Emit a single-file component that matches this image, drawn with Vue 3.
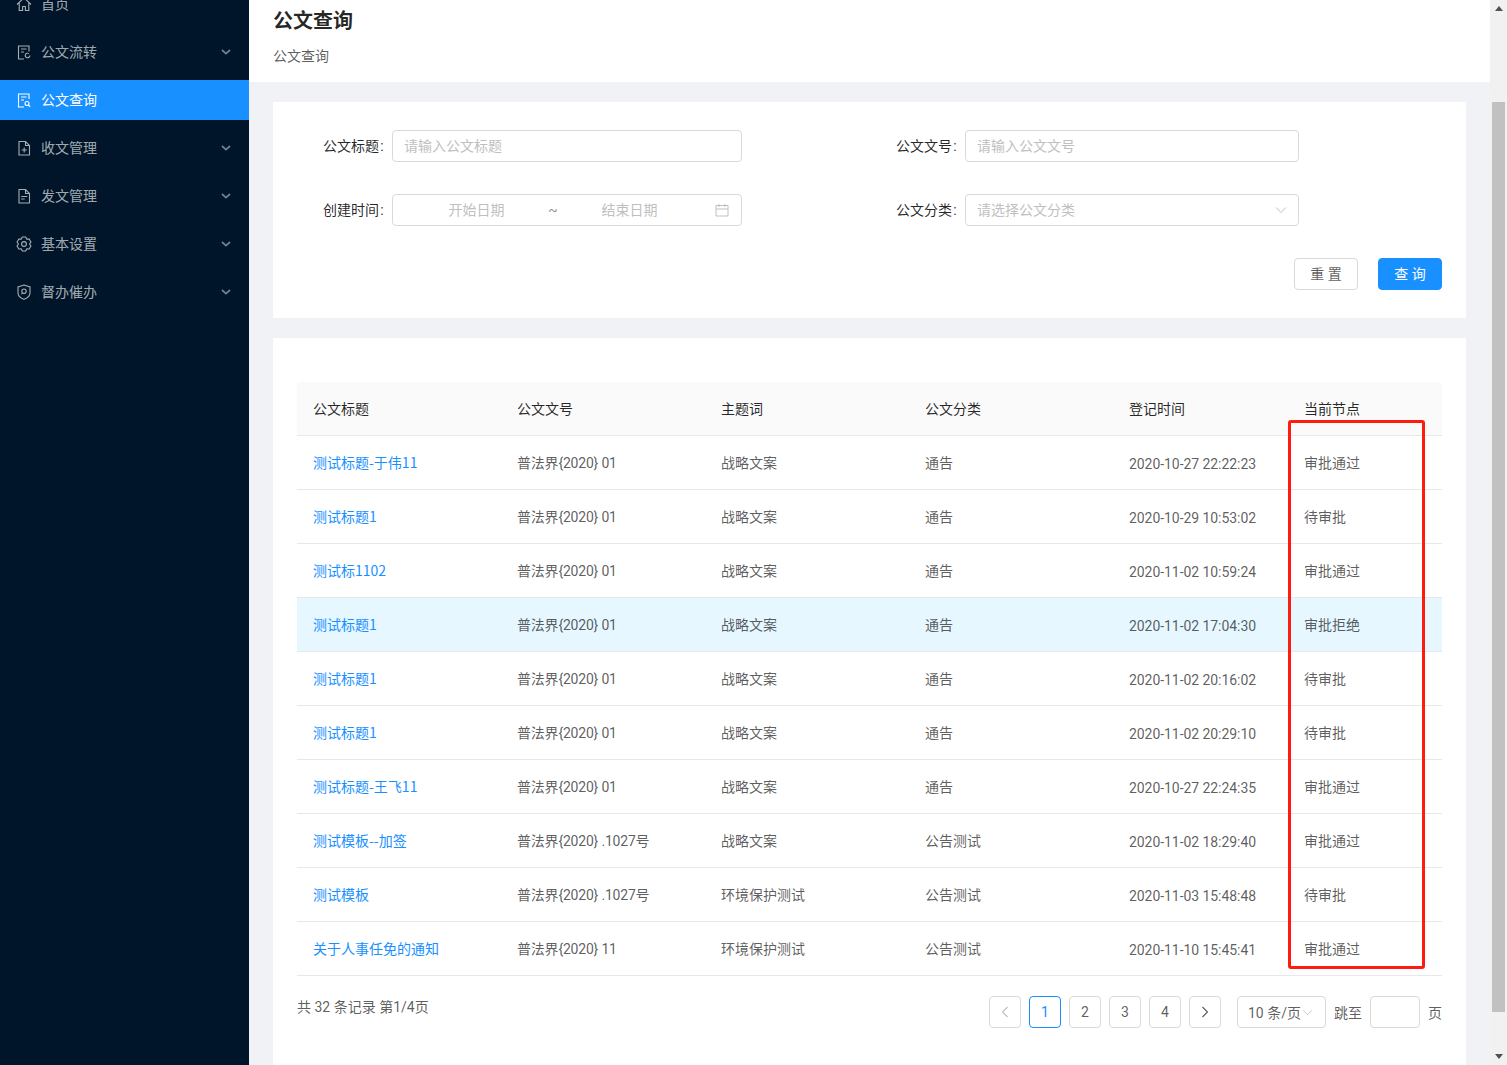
<template>
  <div class="page">
    <aside class="sider">
      <ul class="menu">
        <li
          v-for="item in menus"
          :key="item.name"
          class="menu-item"
          :class="{ active: item.active }"
        >
          <svg class="menu-icon" viewBox="0 0 16 16" width="16" height="16">
            <path :d="item.icon" />
          </svg>
          <span class="menu-name">{{ item.name }}</span>
          <svg v-if="item.arrow" class="menu-arrow" viewBox="0 0 10 6" width="10" height="6">
            <path d="M1 1l4 3.6L9 1" />
          </svg>
        </li>
      </ul>
    </aside>

    <main class="main">
      <header class="head">
        <h1>公文查询</h1>
        <p>公文查询</p>
      </header>

      <div class="body">
        <section class="card search">
          <div class="form">
            <label>公文标题<i>:</i></label>
            <input class="control" placeholder="请输入公文标题" />
            <label>公文文号<i>:</i></label>
            <input class="control" placeholder="请输入公文文号" />
            <label>创建时间<i>:</i></label>
            <div class="control range">
              <input placeholder="开始日期" />
              <span class="tilde">~</span>
              <input placeholder="结束日期" />
              <svg class="calendar" viewBox="0 0 14 14" width="14" height="14">
                <path d="M1 2.5h12v10.5H1zM1 6h12M4 1v3M10 1v3" />
              </svg>
            </div>
            <label>公文分类<i>:</i></label>
            <div class="control select">
              <span>请选择公文分类</span>
              <svg viewBox="0 0 12 8" width="12" height="8">
                <path d="M1 1.500l5 5 5-5" />
              </svg>
            </div>
          </div>
          <div class="actions">
            <button class="btn"><span>重 置</span></button>
            <button class="btn primary"><span>查 询</span></button>
          </div>
        </section>

        <section class="card result">
          <table class="table">
            <colgroup>
              <col style="width: 204px" />
              <col style="width: 204px" />
              <col style="width: 204px" />
              <col style="width: 204px" />
              <col style="width: 175px" />
              <col />
            </colgroup>
            <thead>
              <tr>
                <th v-for="col in columns" :key="col">{{ col }}</th>
              </tr>
            </thead>
            <tbody>
              <tr v-for="(row, i) in rows" :key="i" :class="{ hover: i === 3 }">
                <td class="title"><a>{{ row[0] }}</a></td>
                <td class="code">{{ row[1] }}</td>
                <td>{{ row[2] }}</td>
                <td>{{ row[3] }}</td>
                <td class="time">{{ row[4] }}</td>
                <td>{{ row[5] }}</td>
              </tr>
            </tbody>
          </table>

          <div class="foot">
            <span class="total">共 32 条记录 第1/4页</span>
            <div class="pager">
              <span class="page-btn off">
                <svg viewBox="0 0 8 12" width="8" height="12"><path d="M6.500 1L1.500 6l5 5" /></svg>
              </span>
              <span
                v-for="n in 4"
                :key="n"
                class="page-btn"
                :class="{ current: n === 1 }"
              >{{ n }}</span>
              <span class="page-btn">
                <svg viewBox="0 0 8 12" width="8" height="12"><path d="M1.500 1l5 5-5 5" /></svg>
              </span>
              <span class="size">
                <span>10 条/页</span>
                <svg viewBox="0 0 12 8" width="11" height="7"><path d="M1 1.500l5 5 5-5" /></svg>
              </span>
              <span class="jump">跳至</span>
              <input class="jump-input" />
              <span class="jump">页</span>
            </div>
          </div>
        </section>
      </div>
    </main>

    <div class="scrollbar">
      <i class="tri up"></i>
      <div class="thumb"></div>
      <i class="tri down"></i>
    </div>

    <!-- 截图上的红框标注 -->
    <div class="mark"></div>
  </div>
</template>

<script setup>
// 齿轮图标的路径
const gearPath = () => {
  let d = ''
  for (let i = 0; i < 6; i++) {
    const a = ((i * 60 - 90) * Math.PI) / 180
    const pts = [
      [7.2, a - 0.24],
      [7.2, a + 0.24],
      [5.6, a + 0.52],
    ]
    pts.forEach(([r, t], j) => {
      const x = (8 + r * Math.cos(t)).toFixed(2)
      const y = (8 + r * Math.sin(t)).toFixed(2)
      d += (i === 0 && j === 0 ? 'M' : 'L') + x + ' ' + y
    })
  }
  return d + 'ZM10.4 8a2.4 2.4 0 1 1-4.8 0a2.4 2.4 0 1 1 4.8 0Z'
}

const docFlow = 'M13 7.5V2H2.500v13h5.500M5 5h5.500M5 8h3M13.800 11.500a2.300 2.300 0 1 1-1-1.900'
const docSearch = 'M13 7V2H2.500v13h5.500M5 5h5.500M5 8h3M13 11.500a2 2 0 1 1-4 0a2 2 0 1 1 4 0M12.600 13.200l1.600 1.600'
const docAdd = 'M3 1.500h6.500L13.500 5.500V15H3zM9.500 1.500v4h4M8.200 7.500v5M5.700 10h5'
const docSend = 'M3 1.500h6.500L13.500 5.500V15H3zM9.500 1.500v4h4M5.200 8.500h6M5.200 11h3.500'
const shield = 'M8 1l6 2v6c0 3-2.500 5-6 6.300C4.500 14 2 12 2 9V3zM10.200 7.200a2.200 2.200 0 1 1-4.400 0a2.200 2.200 0 1 1 4.400 0M6.500 8.800l-1 1.400'
const home = 'M1 8.500L8 1.800l7 6.700M3.200 7v7.500h3.400v-4h2.800v4h3.400V7'

const menus = [
  { name: '首页', icon: home },
  { name: '公文流转', icon: docFlow, arrow: true },
  { name: '公文查询', icon: docSearch, active: true },
  { name: '收文管理', icon: docAdd, arrow: true },
  { name: '发文管理', icon: docSend, arrow: true },
  { name: '基本设置', icon: gearPath(), arrow: true },
  { name: '督办催办', icon: shield, arrow: true },
]

const columns = ['公文标题', '公文文号', '主题词', '公文分类', '登记时间', '当前节点']

const rows = [
  ['测试标题-于伟11', '普法界{2020} 01', '战略文案', '通告', '2020-10-27 22:22:23', '审批通过'],
  ['测试标题1', '普法界{2020} 01', '战略文案', '通告', '2020-10-29 10:53:02', '待审批'],
  ['测试标1102', '普法界{2020} 01', '战略文案', '通告', '2020-11-02 10:59:24', '审批通过'],
  ['测试标题1', '普法界{2020} 01', '战略文案', '通告', '2020-11-02 17:04:30', '审批拒绝'],
  ['测试标题1', '普法界{2020} 01', '战略文案', '通告', '2020-11-02 20:16:02', '待审批'],
  ['测试标题1', '普法界{2020} 01', '战略文案', '通告', '2020-11-02 20:29:10', '待审批'],
  ['测试标题-王飞11', '普法界{2020} 01', '战略文案', '通告', '2020-10-27 22:24:35', '审批通过'],
  ['测试模板--加签', '普法界{2020} .1027号', '战略文案', '公告测试', '2020-11-02 18:29:40', '审批通过'],
  ['测试模板', '普法界{2020} .1027号', '环境保护测试', '公告测试', '2020-11-03 15:48:48', '待审批'],
  ['关于人事任免的通知', '普法界{2020} 11', '环境保护测试', '公告测试', '2020-11-10 15:45:41', '审批通过'],
]
</script>

<style>
html,
body {
  margin: 0;
  overflow: hidden;
}
</style>

<style scoped>
.page {
  position: relative;
  display: flex;
  height: 100vh;
  overflow: hidden;
  font-family: Roboto, "Noto Sans CJK SC", sans-serif;
  font-size: 14px;
  color: rgba(0, 0, 0, 0.65);
  background: #f0f2f5;
}

/* 左侧菜单 */
.sider {
  flex: 0 0 249px;
  background: #001529;
}
.menu {
  margin: -16px 0 0;
  padding: 0;
  list-style: none;
  display: flex;
  flex-direction: column;
  gap: 8px;
}
.menu-item {
  display: flex;
  align-items: center;
  height: 40px;
  padding: 0 18px 0 16px;
  color: rgba(255, 255, 255, 0.65);
}
.menu-item.active {
  background: #1890ff;
  color: #fff;
}
.menu-icon {
  margin-right: 9px;
  fill: none;
  stroke: currentColor;
  stroke-width: 1.1;
}
.menu-name {
  flex: 1;
  padding-bottom: 2px;
}
.menu-arrow {
  fill: none;
  stroke: rgba(255, 255, 255, 0.45);
  stroke-width: 1.8;
}

/* 右侧内容 */
.main {
  flex: 1;
  min-width: 0;
  display: flex;
  flex-direction: column;
}
.head {
  height: 82px;
  box-sizing: border-box;
  padding: 7px 24px 0;
  background: #fff;
}
.head h1 {
  margin: 0;
  font-size: 20px;
  line-height: 28px;
  font-weight: 700;
  color: rgba(0, 0, 0, 0.85);
}
.head p {
  margin: 10px 0 0;
  line-height: 22px;
}
.body {
  flex: 1;
  display: flex;
  flex-direction: column;
  gap: 20px;
  padding: 20px 24px 0;
}
.card {
  background: #fff;
}
.search {
  padding: 28px 24px 28px 0;
}
.form {
  display: grid;
  grid-template-columns: 119px 350px 223px 334px;
  row-gap: 32px;
  align-items: center;
}
.form label {
  padding: 0 7px 2px 0;
  text-align: right;
  white-space: nowrap;
  color: rgba(0, 0, 0, 0.85);
}
.form label i {
  display: inline-block;
  width: 6px;
  font-style: normal;
  text-align: center;
}
.control {
  box-sizing: border-box;
  height: 32px;
  padding: 0 11px;
  border: 1px solid #d9d9d9;
  border-radius: 4px;
  background: #fff;
  font: inherit;
  color: rgba(0, 0, 0, 0.65);
  outline: none;
}
input::placeholder {
  color: #bfbfbf;
  opacity: 1;
}
.range {
  display: flex;
  align-items: center;
  padding: 0 0 0 13px;
}
.range input {
  width: 141px;
  padding: 0;
  border: 0;
  outline: none;
  font: inherit;
  text-align: center;
}
.tilde {
  width: 12px;
  text-align: center;
  color: rgba(0, 0, 0, 0.45);
}
.calendar {
  margin-left: 15px;
  fill: none;
  stroke: #bfbfbf;
  stroke-width: 1;
}
.select {
  display: flex;
  align-items: center;
  justify-content: space-between;
  color: #bfbfbf;
}
.select span {
  padding-bottom: 2px;
}
.select svg {
  fill: none;
  stroke: #bfbfbf;
  stroke-width: 1;
}
.actions {
  display: flex;
  justify-content: flex-end;
  gap: 20px;
  margin-top: 32px;
}
.btn {
  width: 64px;
  height: 32px;
  padding: 0 0 2px;
  border: 1px solid #d9d9d9;
  border-radius: 4px;
  background: #fff;
  font: inherit;
  color: rgba(0, 0, 0, 0.65);
}
.btn.primary {
  border-color: #1890ff;
  background: #1890ff;
  color: #fff;
}

/* 列表 */
.result {
  flex: 1;
  padding: 44px 24px 0;
}
.table {
  width: 100%;
  table-layout: fixed;
  border-collapse: separate;
  border-spacing: 0;
}
.table th,
.table td {
  height: 54px;
  box-sizing: border-box;
  padding: 0 16px 2px;
  border-bottom: 1px solid #e8e8e8;
  text-align: left;
  white-space: nowrap;
}
.table th {
  background: #fafafa;
  font-weight: 400;
  color: rgba(0, 0, 0, 0.85);
}
.table th:first-child {
  border-top-left-radius: 4px;
}
.table th:last-child {
  border-top-right-radius: 4px;
}
.table .hover td {
  background: #e6f7ff;
}
.table a {
  color: #1890ff;
}
.table .title {
  font-family: "Noto Sans CJK SC", sans-serif;
}
.table .code {
  letter-spacing: -0.2px;
}
.table .time {
  padding: 2px 16px 0;
  letter-spacing: -0.06px;
}
.foot {
  display: flex;
  justify-content: space-between;
  align-items: flex-start;
  margin-top: 20px;
}
.total {
  line-height: 22px;
}
.pager {
  display: flex;
  align-items: center;
  gap: 8px;
}
.page-btn {
  display: flex;
  align-items: center;
  justify-content: center;
  box-sizing: border-box;
  width: 32px;
  height: 32px;
  border: 1px solid #d9d9d9;
  border-radius: 4px;
}
.page-btn svg {
  fill: none;
  stroke: rgba(0, 0, 0, 0.65);
  stroke-width: 1.1;
}
.page-btn.off svg {
  stroke: #bfbfbf;
}
.page-btn.current {
  border-color: #1890ff;
  color: #1890ff;
}
.size {
  display: flex;
  align-items: center;
  gap: 1px;
  box-sizing: border-box;
  width: 89px;
  height: 32px;
  margin-left: 8px;
  padding: 0 0 0 10px;
  border: 1px solid #d9d9d9;
  border-radius: 4px;
  white-space: nowrap;
}
.size svg {
  fill: none;
  stroke: #bfbfbf;
  stroke-width: 1;
}
.jump-input {
  box-sizing: border-box;
  width: 50px;
  height: 32px;
  border: 1px solid #d9d9d9;
  border-radius: 4px;
  outline: none;
}

/* 滚动条 */
.scrollbar {
  flex: 0 0 17px;
  display: flex;
  flex-direction: column;
  align-items: center;
  background: #f1f1f1;
}
.thumb {
  width: 13px;
  height: 910px;
  margin-top: 91px;
  background: #c1c1c1;
}
.tri {
  width: 0;
  height: 0;
  border-left: 4px solid transparent;
  border-right: 4px solid transparent;
}
.tri.up {
  margin-top: 6px;
  border-bottom: 5px solid #505050;
}
.tri.down {
  margin-top: auto;
  margin-bottom: 6px;
  border-top: 5px solid #505050;
}

/* 红框标注 */
.mark {
  position: absolute;
  left: 1288px;
  top: 420px;
  box-sizing: border-box;
  width: 137px;
  height: 549px;
  border: 3px solid #ff1c0f;
  border-radius: 3px;
  pointer-events: none;
}
</style>
